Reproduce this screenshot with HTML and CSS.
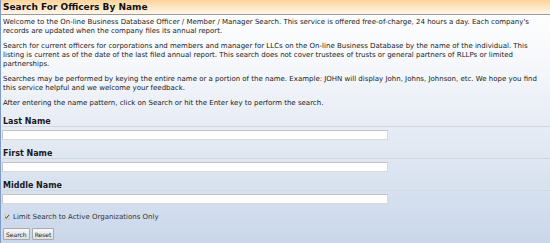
FILE: index.html
```html
<!DOCTYPE html>
<html lang="en">
<head>
    <meta charset="UTF-8">
    <title>Search For Officers By Name</title>
    <link rel="stylesheet" href="styles.css">
</head>
<body>
    <div class="page">
        <div class="title">Search For Officers By Name</div>

        <div class="intro">
            <p>Welcome to the On-line Business Database Officer / Member / Manager Search. This service is offered free-of-charge, 24 hours a day. Each company's records are updated when the company files its annual report.</p>
            <p>Search for current officers for corporations and members and manager for LLCs on the On-line Business Database by the name of the individual. This listing is current as of the date of the last filed annual report. This search does not cover trustees of trusts or general partners of RLLPs or limited partnerships.</p>
            <p>Searches may be performed by keying the entire name or a portion of the name. Example: JOHN will display John, Johns, Johnson, etc. We hope you find this service helpful and we welcome your feedback.</p>
            <p>After entering the name pattern, click on Search or hit the Enter key to perform the search.</p>
        </div>

        <form class="search-form" onsubmit="return false">
            <div class="field-label">Last Name</div>
            <div class="field-row"><input type="text" name="lastName"></div>

            <div class="field-label">First Name</div>
            <div class="field-row"><input type="text" name="firstName"></div>

            <div class="field-label">Middle Name</div>
            <div class="field-row"><input type="text" name="middleName"></div>

            <label class="check">
                <input type="checkbox" checked>
                Limit Search to Active Organizations Only
            </label>

            <div class="buttons">
                <button type="submit">Search</button>
                <button type="reset">Reset</button>
            </div>
        </form>
    </div>
</body>
</html>
```

FILE: styles.css
```css
html, body {
    margin: 0;
    padding: 0;
    height: 100%;
}
body {
    font-family: "DejaVu Sans", Verdana, sans-serif;
    font-size: 7px;
    color: #1a1a1a;
}
.page {
    min-height: 100%;
    box-sizing: border-box;
    border-left: 1px solid #7f9cc6;
    background: linear-gradient(to bottom, #ffffff 0%, #f6f8fb 25%, #e2e9f3 60%, #c9d7ea 100%);
}
.title {
    font-size: 9px;
    font-weight: bold;
    color: #111;
    padding: 2px 2px 1px;
    height: 11px;
    line-height: 11px;
    background: linear-gradient(to bottom, #fbd49a 0%, #fde7c6 55%, #fff6ea 100%);
    border-bottom: 1px solid #9a9a9a;
}
.intro {
    padding: 3px 2px 0;
}
.intro p {
    margin: 0 0 6px;
    line-height: 9px;
}
.intro p:last-child {
    margin-bottom: 9px;
}
.search-form {
    padding: 0 0 0 1px;
}
.field-label {
    font-size: 8px;
    font-weight: bold;
    line-height: 9px;
    padding: 0 1px;
}
.field-row {
    border-top: 1px solid #d3d8df;
    padding: 3px 0 9px;
}
.field-row input {
    display: block;
    width: 386px;
    height: 10px;
    box-sizing: border-box;
    margin: 0;
    padding: 0 2px;
    font-size: 7px;
    border: 1px solid #c4c4c4;
    border-right-color: #d8d8d8;
    border-bottom-color: #d8d8d8;
    background: #fff;
}
.check {
    display: flex;
    align-items: center;
    gap: 3px;
    height: 8px;
    padding: 0 2px;
    color: #333;
}
.check input {
    width: 6px;
    height: 6px;
    margin: 0;
    accent-color: #d6d6d6;
}
.buttons {
    display: flex;
    gap: 2px;
    padding: 7px 1px 0;
}
.buttons button {
    font-family: "DejaVu Sans", Verdana, sans-serif;
    font-size: 6px;
    height: 12px;
    padding: 0 2px;
    color: #222;
    background: linear-gradient(to bottom, #f8f8f8, #dedede);
    border: 1px solid #a9a9a9;
    border-radius: 1px;
}
```
